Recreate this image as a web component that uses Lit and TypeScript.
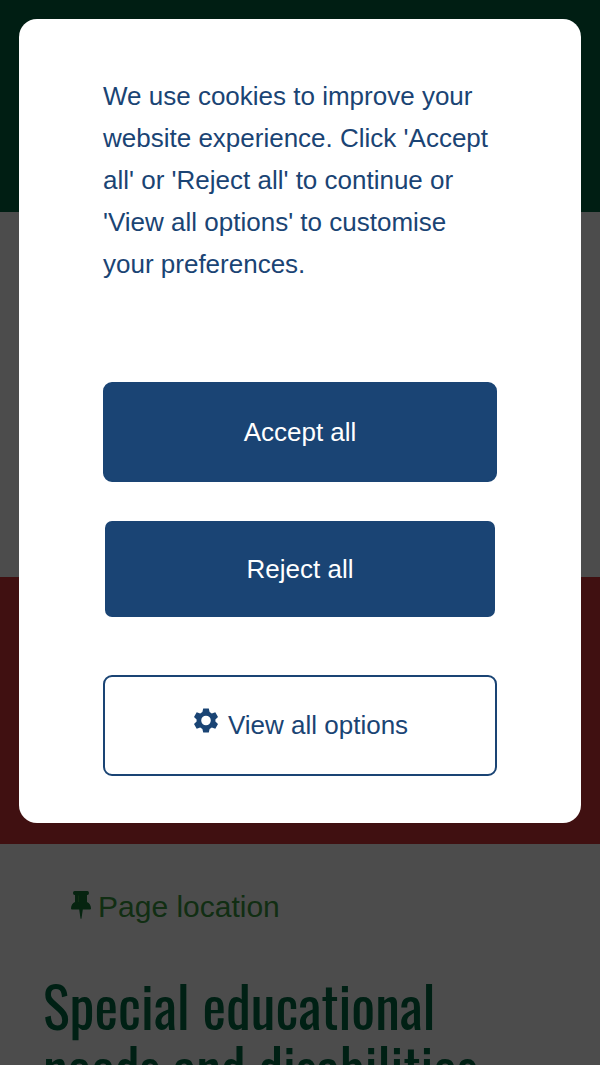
import { LitElement, html, css } from "lit";
import { customElement } from "lit/decorators.js";

@customElement("cookie-dialog")
class CookieDialog extends LitElement {
  static styles = css`
    :host {
      position: fixed;
      inset: 0;
      display: block;
      padding: 19px;
      background: rgba(0, 0, 0, 0.7);
      overflow: auto;
      box-sizing: border-box;
    }
    .panel {
      position: static;
      display: flex;
      flex-direction: column;
      box-sizing: border-box;
      width: auto;
      margin: 0;
      border: 0;
      border-radius: 18px;
      padding: 56px 84px 47px;
      background: #fff;
      color: #1a4474;
      font: 26px/42px "Liberation Sans", Arial, sans-serif;
    }
    .message {
      margin: 0 0 97px;
    }
    .button {
      box-sizing: border-box;
      display: flex;
      align-items: center;
      justify-content: center;
      gap: 10px;
      min-height: 100px;
      margin: 0;
      border: 2px solid #1a4474;
      border-radius: 9px;
      padding: 0 16px;
      background: #1a4474;
      color: #fff;
      font: inherit;
      cursor: pointer;
    }
    .reject {
      min-height: 96px;
      margin: 39px 2px 58px;
      border: 0;
      border-radius: 7px;
    }
    .options {
      min-height: 101px;
      padding: 0 16px 2px 18px;
      background: #fff;
      color: #1a4474;
    }
    .gear {
      width: 24px;
      height: 25px;
      margin-bottom: 8px;
      fill: currentColor;
    }
  `;

  render() {
    return html`
      <dialog open class="panel" aria-label="Cookie preferences">
        <p class="message">
          We use cookies to improve your website experience. Click 'Accept all'
          or 'Reject all' to continue or 'View all options' to customise your
          preferences.
        </p>
        <button class="button" type="button">Accept all</button>
        <button class="button reject" type="button">Reject all</button>
        <button class="button options" type="button">
          <svg class="gear" viewBox="0 0 24 24" aria-hidden="true">
            <path
              fill-rule="evenodd"
              d="M9.200 0h5.600l.8 3.600 2.200 1.300 3.500-1.100L24 8.500l-2.600 2.400v2.200L24 15.500l-2.700 4.700-3.500-1.100-2.200 1.300-.8 3.600H9.200l-.8-3.600-2.200-1.300-3.500 1.100L0 15.500l2.600-2.400v-2.200L0 8.500l2.700-4.700 3.500 1.100 2.200-1.300zM12 7.200a4.800 4.800 0 1 0 0 9.600 4.800 4.800 0 0 0 0-9.600z"
            />
          </svg>
          View all options
        </button>
      </dialog>
    `;
  }
}

@customElement("app-root")
class AppRoot extends LitElement {
  static styles = css`
    :host {
      display: block;
      height: 100vh;
      overflow: hidden;
      background: #fff;
    }
    .header {
      height: 212px;
      background: #006640;
    }
    .intro {
      height: 365px;
    }
    .banner {
      height: 267px;
      background: #d5383a;
    }
    .content {
      padding: 42px 43px;
    }
    .location {
      display: flex;
      align-items: center;
      gap: 7px;
      width: fit-content;
      padding-left: 28px;
      color: #3a9a40;
      font: 30px/42px "Liberation Sans", Arial, sans-serif;
      text-decoration: none;
    }
    .pin {
      width: 20px;
      height: 28px;
      margin-bottom: 4px;
      fill: #147838;
    }
    .title {
      margin: 46px 0 0;
      color: #006b45;
      font: 400 56px/62px Oswald, "Liberation Sans Narrow", "Roboto Condensed",
        "Open Sans Condensed", sans-serif;
    }
  `;

  render() {
    return html`
      <header class="header"></header>
      <section class="intro"></section>
      <section class="banner"></section>
      <main class="content">
        <a class="location" href="#location">
          <svg class="pin" viewBox="0 0 20 28" aria-hidden="true">
            <path
              d="M3.600 0h12.800Q18 0 18 2T16.400 4H16V11C18.500 12.200 20 14.500 20 17.500Q20 18.500 19 18.500H11.800L10.500 27.500Q10 28.300 9.500 27.500L8.200 18.500H1Q0 18.500 0 17.500C0 14.500 1.500 12.200 4 11V4H3.600Q2 4 2 2T3.600 0z"
            />
            <path d="M7 4.500h1V11H7z" fill="#3a9a40" />
          </svg>
          Page location
        </a>
        <h1 class="title">Special educational needs and disabilities</h1>
      </main>
      <cookie-dialog></cookie-dialog>
    `;
  }
}
